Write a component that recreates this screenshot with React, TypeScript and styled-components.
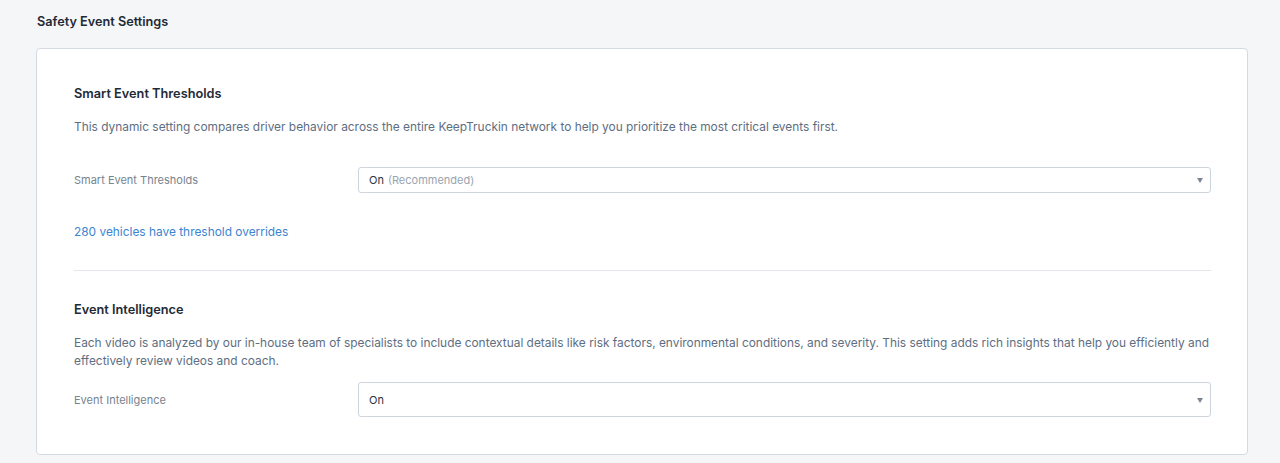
import React from "react";
import styled, { createGlobalStyle } from "styled-components";

const GlobalStyle = createGlobalStyle`
  html, body {
    margin: 0;
    padding: 0;
    background: #f5f6f8;
    font-family: Inter, "Noto Sans", sans-serif;
    -webkit-font-smoothing: antialiased;
  }
`;

const Page = styled.div`
  padding: 13px 32px 0 36px;
`;

const PageTitle = styled.h1`
  margin: 0 0 17px 1px;
  font-size: 12.7px;
  line-height: 18px;
  font-weight: 600;
  color: #1f2a37;
`;

const Card = styled.div`
  background: #fff;
  border: 1px solid #d3dae2;
  border-radius: 4px;
  padding: 36px 36px 37px 37px;
`;

const Section = styled.section`
  display: flex;
  flex-direction: column;
`;

const SectionTitle = styled.h2`
  margin: 0;
  font-size: 12.75px;
  line-height: 18px;
  font-weight: 600;
  color: #1f2a37;
`;

const Description = styled.p`
  margin: 15px 0 0;
  font-size: 11.9px;
  line-height: 18px;
  color: #5e6e82;
`;

const Row = styled.div<{ $gap: number }>`
  display: grid;
  grid-template-columns: 284px 1fr;
  align-items: center;
  margin-top: ${(p) => p.$gap}px;
`;

const Label = styled.span`
  font-size: 11px;
  color: #77838f;
`;

const Select = styled.div<{ $height: number }>`
  position: relative;
  display: flex;
  align-items: center;
  height: ${(p) => p.$height}px;
  box-sizing: border-box;
  padding: 0 28px 0 10px;
  border: 1px solid #cdd4dc;
  border-radius: 3px;
  background: #fff;
  font-size: 11px;
  color: #2b3441;
`;

const Muted = styled.span`
  color: #9aa4b0;
  margin-left: 4px;
`;

const Caret = styled.span`
  position: absolute;
  right: 7px;
  top: 50%;
  margin-top: -2px;
  width: 0;
  height: 0;
  border-left: 3.5px solid transparent;
  border-right: 3.5px solid transparent;
  border-top: 5px solid #7b8794;
`;

const Link = styled.a`
  margin-top: 30px;
  font-size: 11.9px;
  line-height: 18px;
  color: #3c84d0;
  text-decoration: none;
  cursor: pointer;
  align-self: flex-start;
`;

const Divider = styled.hr`
  margin: 29px 0 30px;
  border: none;
  border-top: 1px solid #e3e7ec;
`;

export default function App() {
  return (
    <>
      <GlobalStyle />
      <Page>
        <PageTitle>Safety Event Settings</PageTitle>
        <Card>
          <Section>
            <SectionTitle>Smart Event Thresholds</SectionTitle>
            <Description>
              This dynamic setting compares driver behavior across the entire KeepTruckin network to help you
              prioritize the most critical events first.
            </Description>
            <Row $gap={31}>
              <Label>Smart Event Thresholds</Label>
              <Select $height={26}>
                On<Muted>(Recommended)</Muted>
                <Caret />
              </Select>
            </Row>
            <Link>280 vehicles have threshold overrides</Link>
          </Section>
          <Divider />
          <Section>
            <SectionTitle>Event Intelligence</SectionTitle>
            <Description>
              Each video is analyzed by our in-house team of specialists to include contextual details like risk
              factors, environmental conditions, and severity. This setting adds rich insights that help you
              efficiently and effectively review videos and coach.
            </Description>
            <Row $gap={12}>
              <Label>Event Intelligence</Label>
              <Select $height={35}>
                On
                <Caret />
              </Select>
            </Row>
          </Section>
        </Card>
      </Page>
    </>
  );
}
